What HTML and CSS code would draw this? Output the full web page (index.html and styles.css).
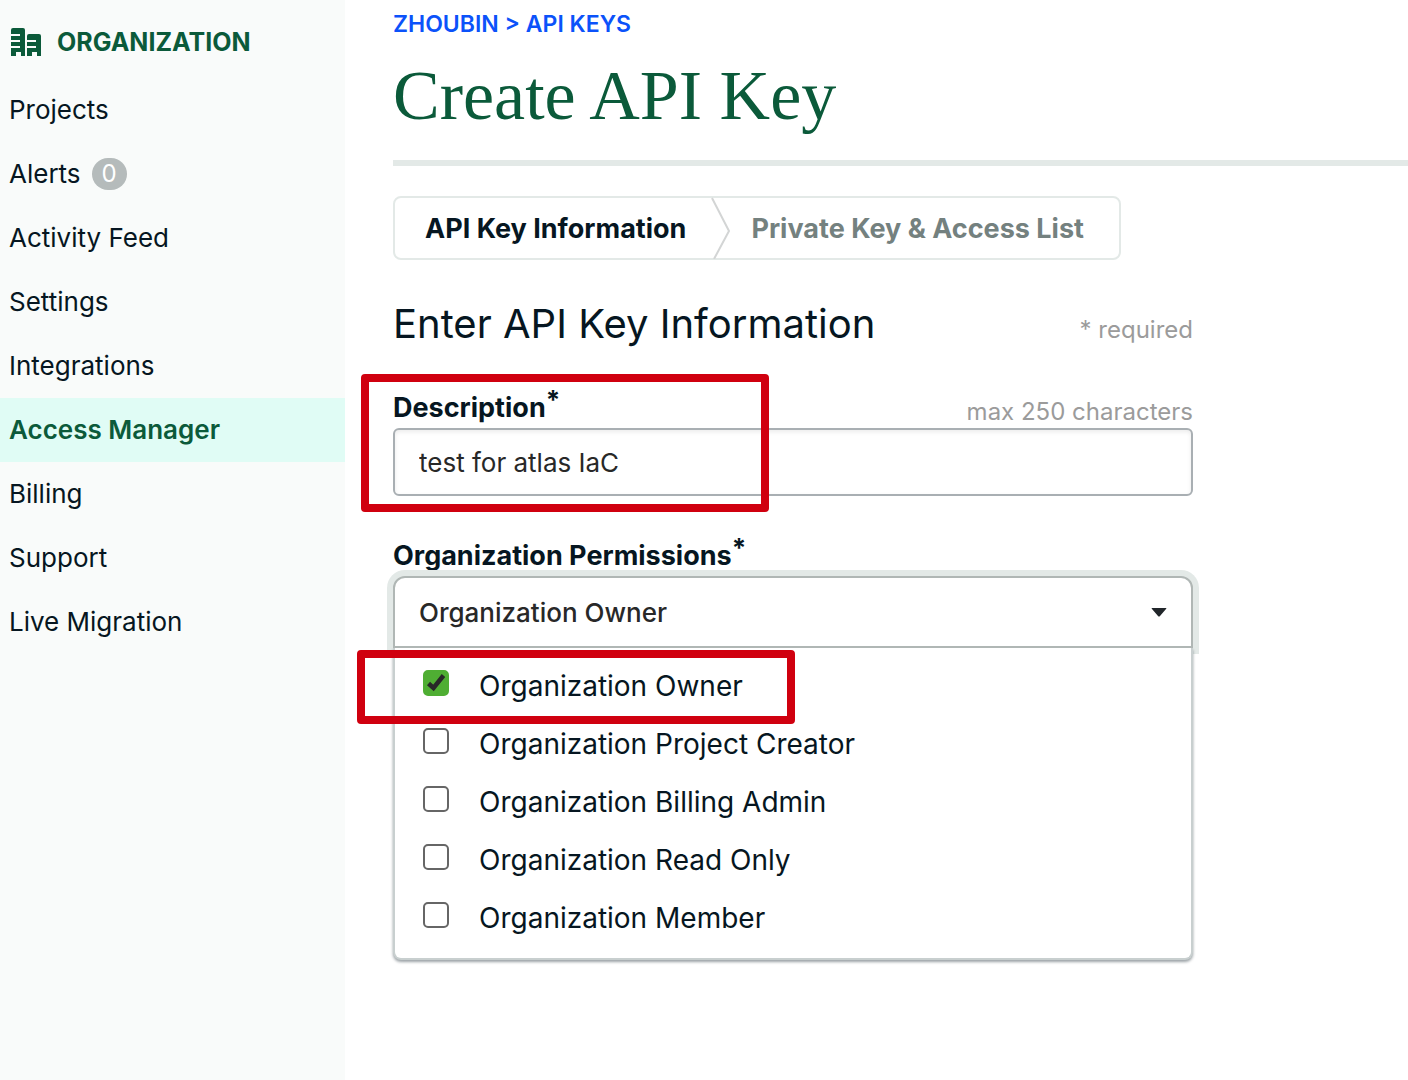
FILE: index.html
```html
<!DOCTYPE html>
<html lang="en">
<head>
<meta charset="utf-8">
<meta name="viewport" content="width=device-width, initial-scale=1">
<title>Create API Key</title>
<link rel="stylesheet" href="styles.css">
</head>
<body>
<div class="app">
  <nav class="sidebar" aria-label="Organization">
    <div class="sidebar-head">
      <svg class="org-icon" viewBox="0 0 30 28" aria-hidden="true">
        <path fill="currentColor" d="M2 0H12Q14 0 14 2V28H10V24H5V28H0V20H9V18H0V14H9V12H0V8H9V6H0V2Q0 0 2 0ZM18 6H28Q30 6 30 8V28H26V24H21V28H16V20H25V18H16V14H25V12H16V8Q16 6 18 6Z"/>
      </svg>
      <span>ORGANIZATION</span>
    </div>
    <a class="nav-link" href="#">Projects</a>
    <a class="nav-link" href="#">Alerts <span class="badge">0</span></a>
    <a class="nav-link" href="#">Activity Feed</a>
    <a class="nav-link" href="#">Settings</a>
    <a class="nav-link" href="#">Integrations</a>
    <a class="nav-link active" href="#" aria-current="page">Access Manager</a>
    <a class="nav-link" href="#">Billing</a>
    <a class="nav-link" href="#">Support</a>
    <a class="nav-link" href="#">Live Migration</a>
  </nav>
  <main class="main">
    <div class="breadcrumb"><a href="#">ZHOUBIN</a> &gt; <a href="#">API KEYS</a></div>
    <h1 class="title">Create API Key</h1>
    <ol class="steps">
      <li class="step current" aria-current="step">API Key Information</li>
      <li class="step-divider" aria-hidden="true">
        <svg viewBox="0 0 20 62"><path d="M1 1L18 34L3 62" fill="none" stroke="#d3d5d5" stroke-width="2"/></svg>
      </li>
      <li class="step">Private Key &amp; Access List</li>
    </ol>
    <form class="form">
      <div class="form-head">
        <h2 class="subtitle">Enter API Key Information</h2>
        <span class="hint">* required</span>
      </div>
      <div class="field">
        <div class="field-head">
          <label class="label" for="description">Description<sup>*</sup></label>
          <span class="hint">max 250 characters</span>
        </div>
        <input class="text-input" id="description" type="text" maxlength="250" value="test for atlas IaC">
        <div class="mark mark-field"></div>
      </div>
      <div class="field">
        <div class="field-head">
          <label class="label" for="permissions">Organization Permissions<sup>*</sup></label>
        </div>
        <div class="dropdown">
          <button class="dropdown-toggle" id="permissions" type="button" aria-expanded="true">
            <span>Organization Owner</span>
            <svg class="caret" viewBox="0 0 16 9" aria-hidden="true"><path d="M1 0H15Q16 0 15 1L9 8Q8 9 7 8L1 1Q0 0 1 0Z" fill="#21262a"/></svg>
          </button>
          <div class="menu">
            <label class="option"><input type="checkbox" checked><span>Organization Owner</span></label>
            <label class="option"><input type="checkbox"><span>Organization Project Creator</span></label>
            <label class="option"><input type="checkbox"><span>Organization Billing Admin</span></label>
            <label class="option"><input type="checkbox"><span>Organization Read Only</span></label>
            <label class="option"><input type="checkbox"><span>Organization Member</span></label>
          </div>
          <div class="mark mark-option"></div>
        </div>
      </div>
    </form>
  </main>
</div>
</body>
</html>
```
FILE: styles.css
```css
* {
  box-sizing: border-box;
}

body {
  margin: 0;
  background: #fff;
  color: #061621;
  font-family: Inter, "Liberation Sans", sans-serif;
  font-size: 26px;
}

a {
  color: inherit;
  text-decoration: none;
}

.app {
  display: flex;
  min-height: 100vh;
}

/* Sidebar */
.sidebar {
  flex: 0 0 345px;
  background: #f9fbfa;
}

.sidebar-head {
  display: flex;
  align-items: center;
  gap: 16px;
  padding: 26px 11px 20px;
  color: #0b5a3a;
  font-size: 25px;
  font-weight: 700;
  line-height: 32px;
}

.org-icon {
  width: 30px;
  height: 28px;
}

.nav-link {
  display: flex;
  align-items: center;
  gap: 11px;
  height: 64px;
  padding: 0 9px;
  font-size: 26px;
  line-height: 32px;
}

.nav-link.active {
  background: #e0fcf5;
  color: #0b5a3a;
  font-weight: 600;
}

.badge {
  padding: 0 10px;
  border-radius: 16px;
  background: #b5bbbb;
  color: #fff;
  font-size: 24px;
  line-height: 32px;
}

/* Main column */
.main {
  flex: 1;
  min-width: 0;
  padding: 8px 0 48px 48px;
}

.breadcrumb {
  color: #0b52fa;
  font-size: 23px;
  font-weight: 600;
  line-height: 32px;
}

.title {
  margin: 0;
  padding: 16px 0 24px;
  border-bottom: 6px solid #e3e9e7;
  color: #0b5a3a;
  font-family: "Liberation Serif", serif;
  font-size: 70px;
  font-weight: 400;
  line-height: 80px;
}

/* Step indicator */
.steps {
  display: flex;
  align-items: stretch;
  width: 728px;
  max-width: 100%;
  height: 64px;
  margin: 30px 0 0;
  padding: 0 30px;
  border: 2px solid #e3e9e7;
  border-radius: 8px;
  list-style: none;
}

.step {
  color: #74817f;
  font-size: 27px;
  font-weight: 700;
  line-height: 62px;
  white-space: nowrap;
}

.step.current {
  color: #061621;
}

.step-divider {
  margin: -1px 20px -1px 25px;
}

.step-divider svg {
  display: block;
  width: 20px;
  height: 62px;
}

/* Form */
.form {
  max-width: 800px;
  margin-top: 36px;
}

.form-head,
.field-head {
  display: flex;
  align-items: flex-end;
  justify-content: space-between;
}

.subtitle {
  margin: 0;
  font-size: 40px;
  font-weight: 400;
  line-height: 56px;
}

.hint {
  color: #9b9b9b;
  font-size: 24px;
  line-height: 32px;
}

.form-head {
  align-items: baseline;
  margin-bottom: 36px;
}

.field {
  position: relative;
  margin-bottom: 40px;
}

.field-head {
  height: 40px;
}

.label {
  font-size: 27px;
  font-weight: 700;
  line-height: 40px;
}

.label sup {
  font-size: 26px;
  line-height: 0;
  vertical-align: 8px;
}

.text-input {
  display: block;
  width: 100%;
  height: 68px;
  padding: 0 24px;
  border: 2px solid #a9afb3;
  border-radius: 6px;
  background: #fff;
  box-shadow: inset 0 2px 4px rgba(0, 0, 0, 0.08);
  color: #282828;
  font: inherit;
  outline: none;
}

.dropdown {
  position: relative;
}

.dropdown-toggle {
  display: flex;
  align-items: center;
  justify-content: space-between;
  width: 100%;
  height: 72px;
  padding: 0 24px;
  border: 2px solid #b0b7b5;
  border-radius: 12px 12px 0 0;
  background: #fff;
  box-shadow: 0 0 0 6px #e3e9e7;
  color: #282828;
  font: inherit;
  font-weight: 500;
}

.caret {
  width: 16px;
  height: 9px;
}

.menu {
  position: absolute;
  top: 100%;
  left: 0;
  right: 0;
  padding: 9px 28px 11px;
  border: 2px solid #c8cfcf;
  border-top: 0;
  border-radius: 0 0 8px 8px;
  background: #fff;
  box-shadow: 0 2px 3px rgba(6, 22, 33, 0.4);
  clip-path: inset(0 -8px -12px);
}

.option {
  display: flex;
  align-items: center;
  gap: 30px;
  height: 58px;
  font-size: 28px;
}

.option input {
  appearance: none;
  width: 26px;
  height: 26px;
  margin: 0 0 7px;
  border: 2px solid #666;
  border-radius: 5px;
  background: #fff;
}

.option input:checked {
  border-color: #4fae33;
  background: #4fae33 url("data:image/svg+xml,%3Csvg xmlns='http://www.w3.org/2000/svg' viewBox='0 0 22 22'%3E%3Cpath d='M3.500 11.500L8.500 16L18.500 3.500' fill='none' stroke='%23282828' stroke-width='4.500'/%3E%3C/svg%3E") center / 22px 22px no-repeat;
}

/* Highlight frames over the form */
.mark {
  position: absolute;
  border: 8px solid #d0000f;
  border-radius: 4px;
  pointer-events: none;
}

.mark-field {
  top: -14px;
  left: -32px;
  width: 408px;
  height: 138px;
}

.mark-option {
  top: 74px;
  left: -36px;
  width: 438px;
  height: 74px;
}
```
